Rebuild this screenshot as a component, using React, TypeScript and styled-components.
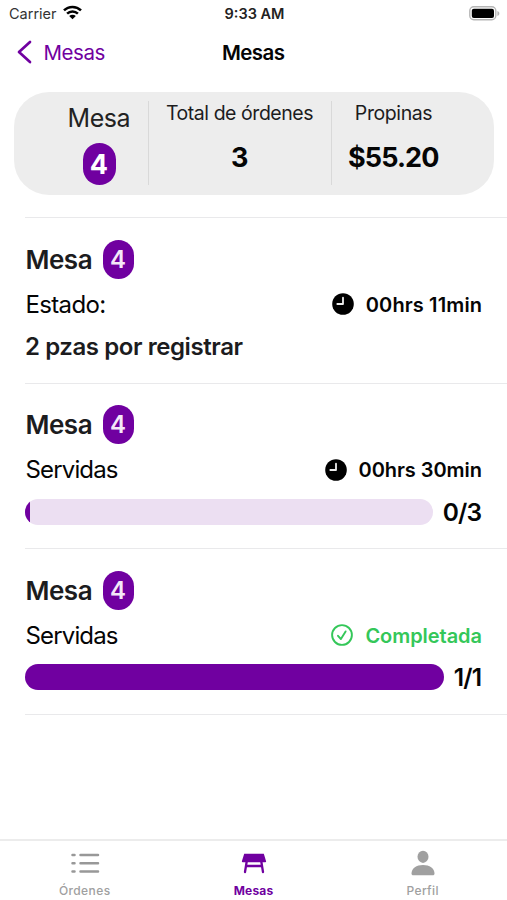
import React from "react";
import styled, { createGlobalStyle } from "styled-components";

const purple = "#7000a0";

const GlobalStyle = createGlobalStyle`
  * { box-sizing: border-box; }
  html, body { margin: 0; background: #fff; }
  body { font-family: Inter, "Liberation Sans", sans-serif; color: #050505; }
  svg { display: block; flex: none; }
`;

const Screen = styled.div`
  width: 507px;
  height: 900px;
  display: flex;
  flex-direction: column;
  overflow: hidden;
  background: #fff;
`;

const Text = styled.span<{ $size: number; $weight?: number; $track?: number; $color?: string; $drop?: number }>`
  font-size: ${(p) => p.$size}px;
  font-weight: ${(p) => p.$weight ?? 400};
  letter-spacing: ${(p) => p.$track ?? 0}px;
  margin-right: ${(p) => -(p.$track ?? 0)}px;
  padding-top: ${(p) => p.$drop ?? 0}px;
  color: ${(p) => p.$color ?? "inherit"};
  line-height: 1.2;
  white-space: nowrap;
`;

const StatusBar = styled.header`
  height: 28px;
  padding: 0 7px 0 9px;
  display: grid;
  grid-template-columns: 1fr auto 1fr;
  align-items: center;
  flex: none;
`;

const Carrier = styled.div`
  display: flex;
  align-items: center;
  gap: 6px;
`;

const WifiSlot = styled.div`
  padding-bottom: 2px;
`;

const BatterySlot = styled.div`
  display: flex;
  justify-content: flex-end;
  padding-bottom: 2px;
`;

const NavBar = styled.nav`
  height: 64px;
  padding: 0 17px 16px;
  display: grid;
  grid-template-columns: 1fr auto 1fr;
  align-items: center;
  flex: none;
`;

const BackButton = styled.a`
  display: flex;
  align-items: center;
  gap: 11.5px;
  color: ${purple};
`;

const Summary = styled.section`
  margin: 0 13px 22px 14px;
  height: 103px;
  padding: 9px 14px 12px 36px;
  border-radius: 35px;
  background: #ededed;
  display: grid;
  grid-template-columns: 98px 182.5px 1fr;
  flex: none;
`;

const SummaryCell = styled.div<{ $top: number; $gap: number; $shift?: number }>`
  display: flex;
  flex-direction: column;
  align-items: center;
  padding-top: ${(p) => p.$top}px;
  padding-right: ${(p) => p.$shift ?? 0}px;
  gap: ${(p) => p.$gap}px;
  & + & { border-left: 1px solid #d9d9d9; }
`;

const Badge = styled.span<{ $large?: boolean }>`
  width: ${(p) => (p.$large ? 33 : 31)}px;
  height: ${(p) => (p.$large ? 42 : 39)}px;
  border-radius: 17px;
  background: ${purple};
  color: ${(p) => (p.$large ? "#fff" : "#f4e8f8")};
  display: flex;
  align-items: center;
  justify-content: center;
  flex: none;
`;

const OrderList = styled.main`
  flex: 1;
  margin-left: 25px;
  border-top: 1px solid #e9e9eb;
`;

const Order = styled.article`
  height: 165.5px;
  padding: 21px 25px 0 0;
  border-bottom: 1px solid #e9e9eb;
`;

const TitleRow = styled.div`
  height: 40px;
  padding-left: 0.5px;
  display: flex;
  align-items: center;
  gap: 10px;
  color: #1c1c1e;
`;

const InfoRow = styled.div`
  height: 50px;
  padding-left: 0.5px;
  display: flex;
  align-items: center;
  justify-content: space-between;
`;

const Status = styled.div<{ $done?: boolean }>`
  display: flex;
  align-items: center;
  gap: 12px;
  color: ${(p) => (p.$done ? "#34c759" : "#050505")};
`;

const DetailRow = styled.div`
  height: 34px;
  display: flex;
  align-items: center;
  gap: 10px;
`;

const Track = styled.div`
  flex: 1;
  height: 26px;
  border-radius: 13px;
  overflow: hidden;
  background: #ecdff2;
`;

const Fill = styled.div`
  height: 100%;
  background: ${purple};
`;

const TabBar = styled.footer`
  height: 61px;
  border-top: 2px solid #ececec;
  display: grid;
  grid-template-columns: repeat(3, 1fr);
  flex: none;
`;

const Tab = styled.a<{ $active?: boolean }>`
  display: flex;
  flex-direction: column;
  align-items: center;
  padding-top: 9px;
  gap: 8px;
  color: ${(p) => (p.$active ? purple : "#a0a0a0")};
`;

const WifiIcon = () => (
  <svg width="19" height="15" viewBox="0 0 19 15" fill="none" stroke="#000" strokeWidth="2.5">
    <path d="M1 5.4C5.7.8 13.3.8 18 5.4M4.1 8.7c3-3 7.8-3 10.8 0" />
    <path d="M9.5 14.2 6.2 11c1.8-1.7 4.8-1.7 6.6 0Z" fill="#000" stroke="none" />
  </svg>
);

const BatteryIcon = () => (
  <svg width="31" height="15" viewBox="0 0 31 15">
    <rect x=".8" y=".8" width="26" height="13" rx="4" fill="#fff" stroke="#b5b5b5" strokeWidth="1.4" />
    <rect x="2.8" y="2.7" width="22.2" height="9.2" rx="2" fill="#000" />
    <path d="M28.4 5v5c2.6-1 2.6-4 0-5Z" fill="#b5b5b5" />
  </svg>
);

const ChevronIcon = () => (
  <svg width="15" height="24" viewBox="0 0 15 24" fill="none" stroke="currentColor" strokeWidth="2.7" strokeLinecap="round" strokeLinejoin="round">
    <path d="M13 2 2 12l11 10" />
  </svg>
);

const ClockIcon = () => (
  <svg width="22" height="22" viewBox="0 0 22 22">
    <circle cx="11" cy="11" r="10.8" fill="#000" />
    <path d="M11 4.7V11H5.3" fill="none" stroke="#eee" strokeWidth="1.8" strokeLinecap="round" strokeLinejoin="round" />
  </svg>
);

const CheckIcon = () => (
  <svg width="22" height="22" viewBox="0 0 22 22" fill="none" stroke="currentColor" strokeWidth="1.9" strokeLinecap="round" strokeLinejoin="round">
    <circle cx="11" cy="11" r="9.9" />
    <path d="m7 11.8 2.9 3.2 4.7-7.6" />
  </svg>
);

const ListIcon = () => (
  <svg width="30" height="26" viewBox="0 0 30 26" fill="none" stroke="#989898" strokeWidth="2.5" strokeLinecap="round">
    <path d="M2.5 5h2M10.5 5h17.5M2.5 13.3h2M10.5 13.3h17.5M2.5 21.6h2M10.5 21.6h17.5" />
  </svg>
);

const TableIcon = () => (
  <svg width="26" height="26" viewBox="0 0 26 26" fill="currentColor">
    <path d="M3.2 3.8h19.6l2.3 7.4c.1.6-.2 1-.8 1H1.7c-.6 0-.9-.4-.8-1Z" />
    <path d="M5.7 11.5 4 22M20.3 11.5 22 22M5 16h16" fill="none" stroke="currentColor" strokeWidth="2.3" strokeLinecap="round" />
  </svg>
);

const PersonIcon = () => (
  <svg width="26" height="26" viewBox="0 0 26 26" fill="currentColor">
    <ellipse cx="13" cy="6.8" rx="5.5" ry="6.1" />
    <path d="M1.5 23.5C1.5 18.3 6.5 15 13 15s11.5 3.3 11.5 8.5c0 1.2-.6 1.8-1.8 1.8H3.3c-1.2 0-1.8-.6-1.8-1.8Z" />
  </svg>
);

type OrderData = { label: string; time?: string; pending?: string; count?: string; progress?: number };

const orders: OrderData[] = [
  { label: "Estado:", time: "00hrs 11min", pending: "2 pzas por registrar" },
  { label: "Servidas", time: "00hrs 30min", count: "0/3", progress: 1.2 },
  { label: "Servidas", count: "1/1", progress: 100 },
];

const OrderItem = ({ order }: { order: OrderData }) => (
  <Order>
    <TitleRow>
      <Text $size={26} $weight={600} $track={-0.5} $drop={1}>Mesa</Text>
      <Badge><Text $size={24} $weight={600} $drop={2}>4</Text></Badge>
    </TitleRow>
    <InfoRow>
      <Text $size={24} $track={order.pending ? -0.65 : -0.85} $drop={2}>{order.label}</Text>
      <Status $done={!order.time}>
        {order.time ? <ClockIcon /> : <CheckIcon />}
        <Text $size={20} $weight={600} $track={order.pending ? 0.12 : -0.05} $drop={1}>{order.time ?? "Completada"}</Text>
      </Status>
    </InfoRow>
    <DetailRow>
      {order.pending ? (
        <Text $size={24} $weight={600} $track={-0.42} $color="#1c1c1e" $drop={2}>{order.pending}</Text>
      ) : (
        <>
          <Track><Fill style={{ width: `${order.progress}%` }} /></Track>
          <Text $size={24.5} $weight={600} $track={-0.9} $drop={2}>{order.count}</Text>
        </>
      )}
    </DetailRow>
  </Order>
);

export default function App() {
  return (
    <Screen>
      <GlobalStyle />
      <StatusBar>
        <Carrier>
          <Text $size={14.5} $color="#333">Carrier</Text>
          <WifiSlot><WifiIcon /></WifiSlot>
        </Carrier>
        <Text $size={14.5} $weight={600} $color="#222">9:33 AM</Text>
        <BatterySlot><BatteryIcon /></BatterySlot>
      </StatusBar>
      <NavBar>
        <BackButton>
          <ChevronIcon />
          <Text $size={20.5} $track={-0.45} $drop={2}>Mesas</Text>
        </BackButton>
        <Text $size={20.5} $weight={600} $track={-0.6} $drop={2}>Mesas</Text>
      </NavBar>
      <Summary>
        <SummaryCell $top={2} $gap={10}>
          <Text $size={25} $track={-0.5} $color="#222">Mesa</Text>
          <Badge $large><Text $size={27} $weight={700} $drop={2}>4</Text></Badge>
        </SummaryCell>
        <SummaryCell $top={1} $gap={17}>
          <Text $size={19.5} $track={-0.45} $color="#1c1c1e">Total de órdenes</Text>
          <Text $size={27} $weight={700}>3</Text>
        </SummaryCell>
        <SummaryCell $top={1} $gap={17} $shift={24}>
          <Text $size={19.5} $track={-0.4} $color="#1c1c1e">Propinas</Text>
          <Text $size={27} $weight={700} $track={-0.9}>$55.20</Text>
        </SummaryCell>
      </Summary>
      <OrderList>
        {orders.map((order, i) => <OrderItem key={i} order={order} />)}
      </OrderList>
      <TabBar>
        <Tab><ListIcon /><Text $size={12} $weight={500} $track={0.4}>Órdenes</Text></Tab>
        <Tab $active><TableIcon /><Text $size={12} $weight={700} $track={0.2}>Mesas</Text></Tab>
        <Tab><PersonIcon /><Text $size={12} $weight={500} $track={0.4}>Perfil</Text></Tab>
      </TabBar>
    </Screen>
  );
}
